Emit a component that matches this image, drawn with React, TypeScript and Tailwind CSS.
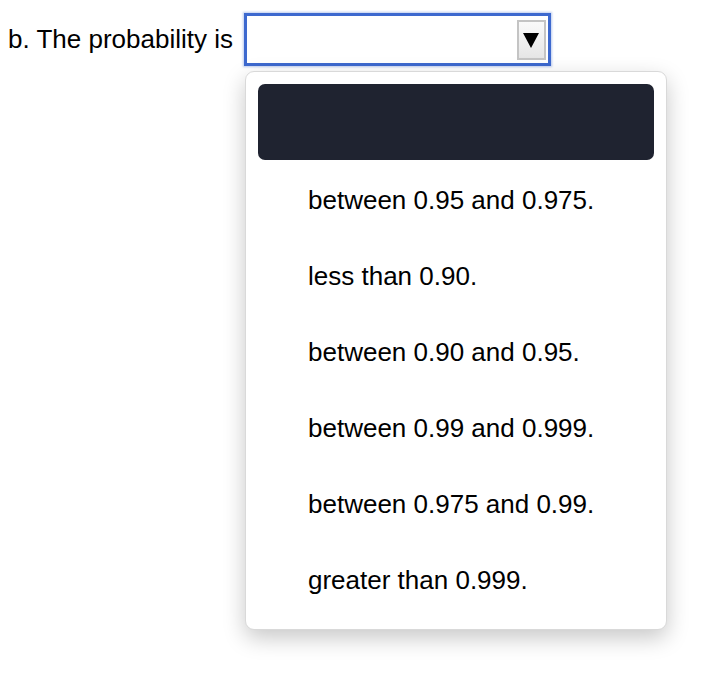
import React from "react";

const options = [
  "between 0.95 and 0.975.",
  "less than 0.90.",
  "between 0.90 and 0.95.",
  "between 0.99 and 0.999.",
  "between 0.975 and 0.99.",
  "greater than 0.999.",
];

export default function App() {
  return (
    <div
      className="w-[716px] h-[686px] bg-white text-black text-[26px] relative"
      style={{ fontFamily: '"Liberation Sans", Arial, sans-serif' }}
    >
      <div className="flex items-center pt-[13px] pl-[8px]">
        <span className="mr-[11px] leading-[26px] -mt-[1px]">b. The probability is</span>
        <div className="relative w-[307px] h-[53px] border-[3px] border-[#3d69cf] bg-white shadow-[0_0_2px_1px_rgba(61,105,207,0.35)]">
          <div className="absolute right-[2px] top-[4px] w-[29px] h-[40px] border-2 border-[#c4c4c4] bg-gradient-to-b from-[#fafafa] to-[#e6e6e6] flex items-center justify-center">
            <svg width="16" height="15" viewBox="0 0 16 15">
              <polygon points="0,0 16,0 8,15" fill="#000" />
            </svg>
          </div>
        </div>
      </div>
      <div className="absolute left-[245px] top-[71px] w-[422px] h-[559px] rounded-[9px] border border-[#d9d9d9] bg-white shadow-[0_8px_22px_rgba(0,0,0,0.22)] p-[12px]">
        <div className="h-[76px] rounded-[7px] bg-[#1f2330]" />
        <div className="flex flex-col">
          {options.map((o) => (
            <div key={o} className="h-[76px] flex items-center pl-[50px] pt-[3px] leading-[26px]">
              {o}
            </div>
          ))}
        </div>
      </div>
    </div>
  );
}
